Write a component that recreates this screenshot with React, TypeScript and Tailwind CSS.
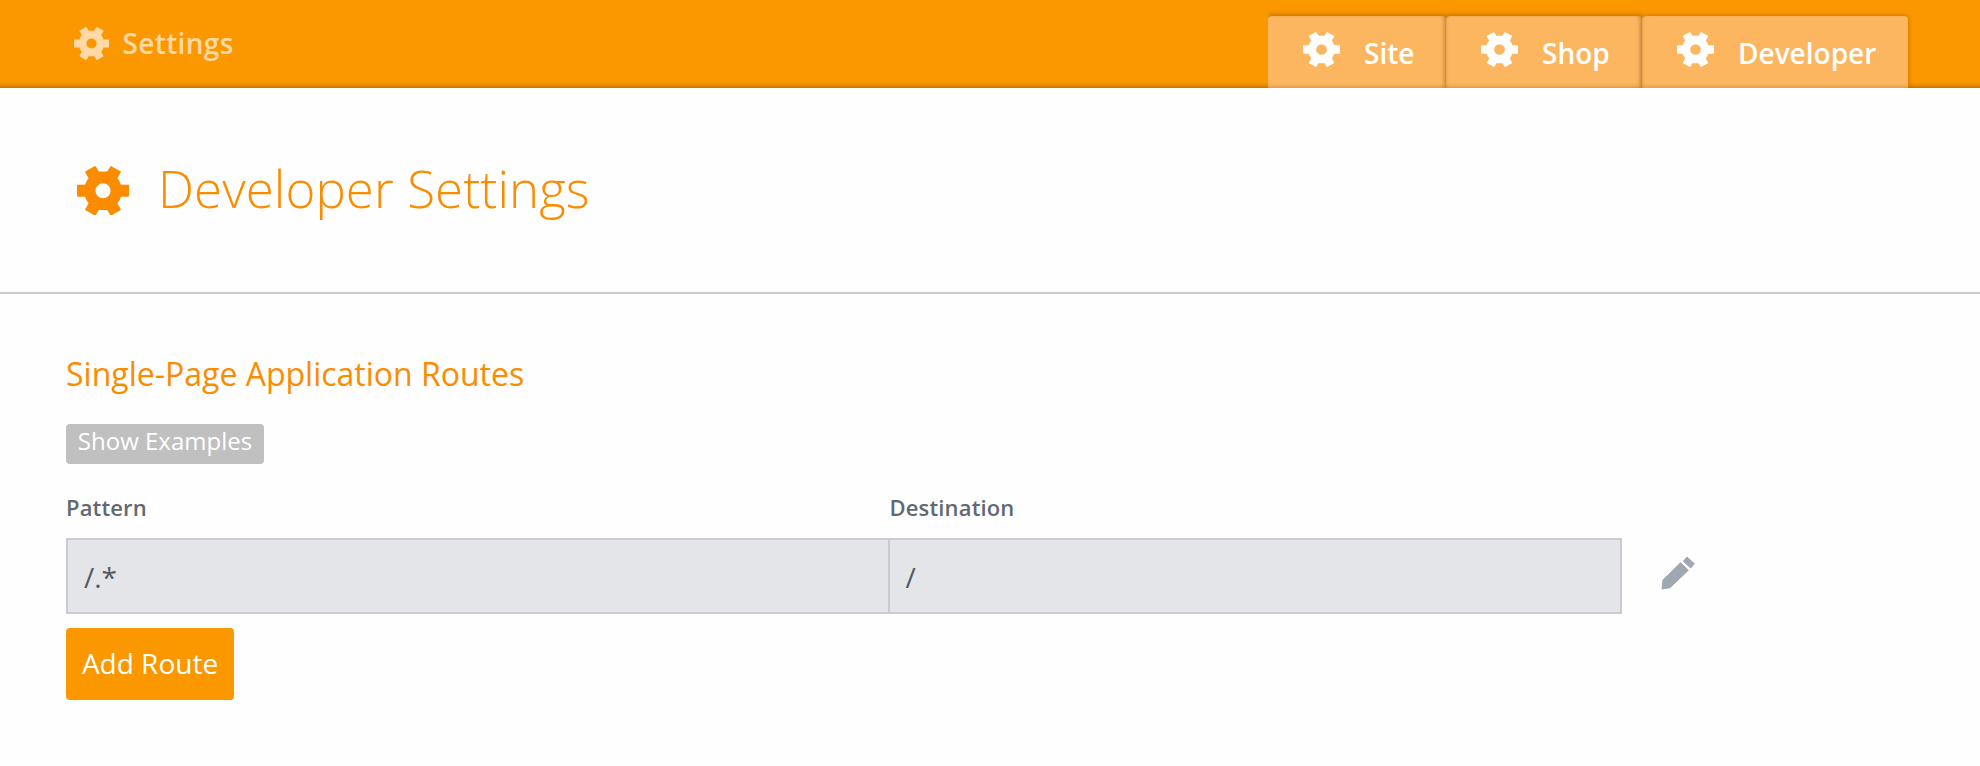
import React from "react";

function Gear({ className }: { className: string }) {
  return (
    <svg viewBox="-77.5 -75 155 150" preserveAspectRatio="none" className={className} fill="currentColor" stroke="currentColor" strokeWidth="5" strokeLinejoin="round">
      <path
        fillRule="evenodd"
        d="M75-15.5V15.5H51.5Q49 28 40 37.5L50.5 56.8L23.8 72.3L14 56H-14L-23.8 72.3L-50.5 56.8L-40 37.5Q-49 28-51.5 15.5H-75V-15.5H-51.5Q-49-28-40-37.5L-50.5-56.8L-23.8-72.3L-14-56H14L23.8-72.3L50.5-56.8L40-37.5Q49-28 51.5-15.5ZM25 0A25 25 0 1 0-25 0A25 25 0 1 0 25 0Z"
      />
    </svg>
  );
}

function Pencil() {
  return (
    <svg viewBox="0 0 102 102" className="h-[34px] w-[34px] text-[#9fa7b1]" fill="currentColor" stroke="currentColor" strokeWidth="3" strokeLinejoin="round">
      <path d="M78 3L100 23L89 36L67 16Z" />
      <path d="M59 20L82 43L27 95L3 99L6 72Z" />
    </svg>
  );
}

const tabs = [
  { label: "Site", style: "w-[178px] shadow-[0_-2px_4px_rgba(130,70,0,0.4),inset_-3px_0_4px_-2px_rgba(120,70,10,0.35)]" },
  { label: "Shop", style: "w-[196px] shadow-[0_-2px_4px_rgba(130,70,0,0.4),inset_-3px_0_4px_-2px_rgba(120,70,10,0.35),inset_2px_0_3px_-2px_rgba(120,70,10,0.35)]" },
  { label: "Developer", style: "w-[266px] shadow-[0_0_5px_rgba(130,70,0,0.5),inset_2px_0_3px_-2px_rgba(120,70,10,0.35)]" },
];

export default function App() {
  return (
    <div className="h-[766px] w-[1980px] overflow-hidden bg-[#fefefe] font-['Open_Sans',sans-serif]">
      <header className="flex h-[88px] items-start justify-between bg-[#fb9800] bg-[linear-gradient(to_top,rgba(110,60,0,0.38),rgba(110,60,0,0.12)_3px,transparent_6px)] pr-[72px] pl-[73.5px]">
        <div className="flex items-start text-[#fed8a5]">
          <Gear className="mt-[26.5px] h-[33px] w-[35px]" />
          <span className="mt-[23px] ml-[14px] text-[28px] leading-[40px] font-semibold tracking-[0.35px]">Settings</span>
        </div>
        <nav className="mt-4 flex h-[72px] [clip-path:inset(-8px_-8px_0_0)]">
          {tabs.map((t) => (
            <a
              key={t.label}
              className={`${t.style} flex items-start rounded-t-[4px] bg-[#fcb65f] bg-[linear-gradient(to_top,rgba(110,60,0,0.16),transparent_5px)] pl-[35px] text-white`}
            >
              <Gear className="mt-4 h-[35px] w-[37px]" />
              <span className="mt-[17px] ml-6 text-[28px] leading-[40px] font-semibold">{t.label}</span>
            </a>
          ))}
        </nav>
      </header>

      <section className="flex h-[206px] items-start border-b-2 border-[#c9cacd] pl-[77px] text-[#fb8c00]">
        <Gear className="mt-[77.5px] h-[49.5px] w-[52px]" />
        <h1 className="mt-[70px] ml-[29px] text-[51px] leading-[60px] font-light tracking-[0.08px] whitespace-nowrap">Developer Settings</h1>
      </section>

      <main className="flex flex-col items-start pl-[66px]">
        <h2 className="mt-[59px] text-[32px] leading-[41px] text-[#fb8c00]">Single-Page Application Routes</h2>
        <button className="mt-[30px] h-10 w-[198px] rounded-[4px] bg-[#c0c0c0] pb-1.5 text-[24px] leading-[34px] text-white">Show Examples</button>
        <div className="mt-7 flex text-[22px] leading-[30px] font-semibold tracking-[0.15px] text-[#616973]">
          <div className="w-[823.5px]">Pattern</div>
          <div>Destination</div>
        </div>
        <div className="mt-4 flex items-start">
          <div className="flex h-[76px] w-[1556px] border-2 border-[#c9cbd0] bg-[#e3e5e9] text-[28px] leading-[40px] text-[#545963]">
            <div className="w-[822px] border-r-2 border-[#c9cbd0] pt-[17px] pl-4">/.*</div>
            <div className="pt-[17px] pl-[15.5px]">/</div>
          </div>
          <div className="mt-[18px] ml-[39px]">
            <Pencil />
          </div>
        </div>
        <button className="mt-[14px] h-[72px] w-[168px] rounded-[4px] bg-[#fb9800] pb-0.5 text-[28px] leading-[40px] whitespace-nowrap text-white">Add Route</button>
      </main>
    </div>
  );
}
